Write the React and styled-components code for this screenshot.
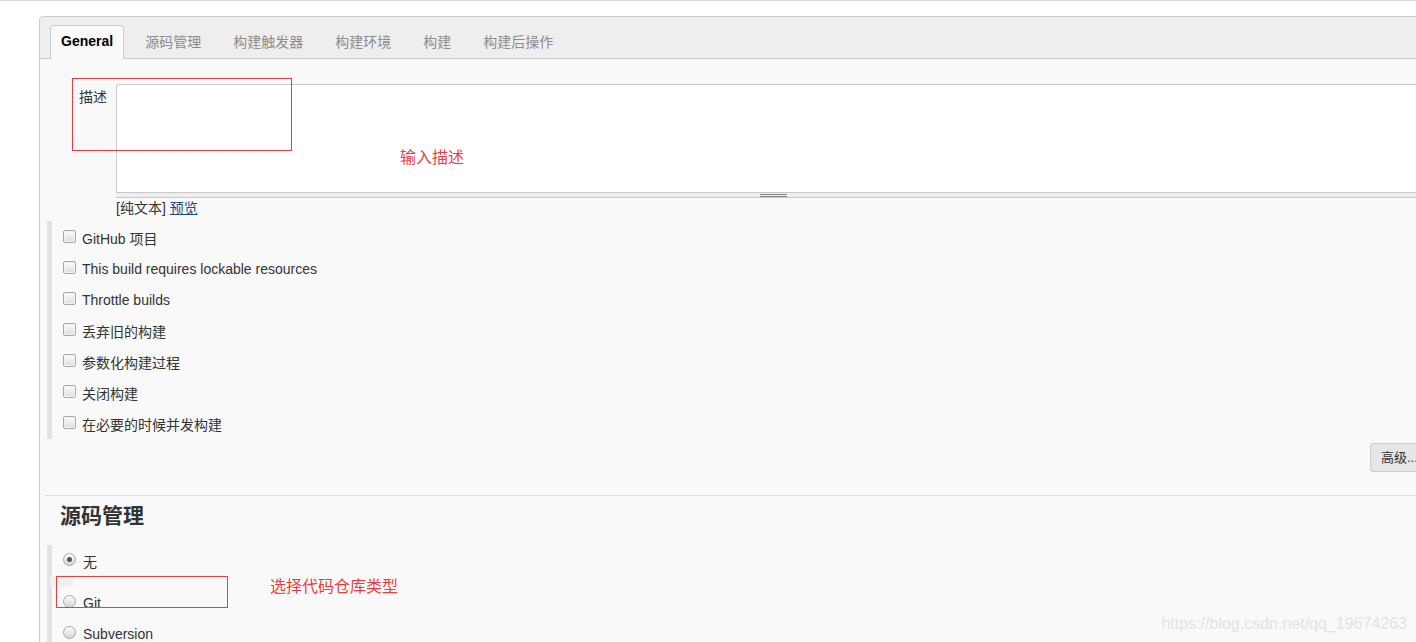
import styled, { createGlobalStyle } from "styled-components";

const GlobalStyle = createGlobalStyle`
  html, body {
    margin: 0;
    padding: 0;
    background: #ffffff;
    overflow: hidden;
  }
  body {
    font-family: "Liberation Sans", Arial, "Noto Sans CJK SC", sans-serif;
    font-size: 14px;
    color: #333333;
  }
`;

const tabs = ["General", "源码管理", "构建触发器", "构建环境", "构建", "构建后操作"];

const options = [
  "GitHub 项目",
  "This build requires lockable resources",
  "Throttle builds",
  "丢弃旧的构建",
  "参数化构建过程",
  "关闭构建",
  "在必要的时候并发构建",
];

export default function App() {
  return (
    <Page>
      <GlobalStyle />
      <TopLine />
      <Panel>
        <TabBar>
          {tabs.map((tab, i) => (
            <Tab key={tab} $active={i === 0}>
              {tab}
            </Tab>
          ))}
        </TabBar>
        <PanelBody>
          <FormRow>
            <Label>描述</Label>
            <Field>
              <TextArea />
              <ResizeBar>
                <Grip />
              </ResizeBar>
              <Hint>
                [纯文本] <PreviewLink>预览</PreviewLink>
              </Hint>
            </Field>
          </FormRow>

          <OptionGroup>
            {options.map((opt) => (
              <OptionRow key={opt}>
                <CheckBox />
                <span>{opt}</span>
              </OptionRow>
            ))}
          </OptionGroup>

          <ButtonRow>
            <AdvancedButton>高级...</AdvancedButton>
          </ButtonRow>

          <Divider />
          <SectionTitle>源码管理</SectionTitle>

          <RadioGroup>
            <OptionRow>
              <Radio $checked />
              <span>无</span>
            </OptionRow>
            <Spacer />
            <OptionRow>
              <Radio />
              <span>Git</span>
            </OptionRow>
            <OptionRow>
              <Radio />
              <span>Subversion</span>
            </OptionRow>
          </RadioGroup>
        </PanelBody>
      </Panel>

      <NoteBox style={{ left: 72, top: 78, width: 218, height: 71 }} />
      <NoteText style={{ left: 400, top: 147 }}>输入描述</NoteText>
      <NoteBox style={{ left: 56, top: 576, width: 170, height: 30 }} />
      <NoteText style={{ left: 270, top: 576 }}>选择代码仓库类型</NoteText>

      <Watermark>https://blog.csdn.net/qq_19674263</Watermark>
    </Page>
  );
}

const Page = styled.div`
  position: relative;
  width: 1416px;
  height: 642px;
  overflow: hidden;
`;

const TopLine = styled.div`
  height: 1px;
  background: #d9d9d4;
`;

const Panel = styled.div`
  margin: 15px 0 0 39px;
  width: 1400px;
  border: 1px solid #cccccc;
  border-radius: 4px 0 0 0;
  background: #f9f9f9;
  height: 700px;
`;

const TabBar = styled.div`
  display: flex;
  align-items: flex-end;
  height: 41px;
  padding-left: 10px;
  background: #eeeeee;
  border-bottom: 1px solid #cccccc;
  border-radius: 4px 0 0 0;
`;

const Tab = styled.div`
  display: flex;
  align-items: center;
  height: 30px;
  padding: 0 ${(p) => (p.$active ? "10px" : "15px")} 3px;
  margin-right: ${(p) => (p.$active ? "5px" : "0")};
  margin-bottom: -1px;
  font-size: 14px;
  font-weight: ${(p) => (p.$active ? "bold" : "normal")};
  color: ${(p) => (p.$active ? "#000000" : "#8c8c8c")};
  background: ${(p) => (p.$active ? "#f9f9f9" : "transparent")};
  border: 1px solid ${(p) => (p.$active ? "#cccccc" : "transparent")};
  border-bottom: none;
  border-radius: 4px 4px 0 0;
`;

const PanelBody = styled.div`
  padding: 25px 10px 0 0;
`;

const FormRow = styled.div`
  display: flex;
  align-items: flex-start;
`;

const Label = styled.div`
  width: 37px;
  margin-left: 39px;
  padding-top: 6px;
  line-height: 15px;
`;

const Field = styled.div`
  flex: 1;
  display: flex;
  flex-direction: column;
`;

const TextArea = styled.div`
  height: 107px;
  background: #ffffff;
  border: 1px solid #cccccc;
  border-bottom: none;
  border-radius: 3px 3px 0 0;
`;

const ResizeBar = styled.div`
  display: flex;
  justify-content: center;
  height: 3px;
  padding-top: 1px;
  background: #eeeeee;
  border-top: 1px solid #c6c6c6;
  border-bottom: 1px solid #c6c6c6;
`;

const Grip = styled.div`
  width: 27px;
  height: 3px;
  border-top: 1px solid #888888;
  border-bottom: 1px solid #888888;
  box-sizing: border-box;
`;

const Hint = styled.div`
  height: 20px;
  line-height: 20px;
  color: #333333;
`;

const PreviewLink = styled.span`
  color: #204a87;
  text-decoration: underline;
`;

const OptionGroup = styled.div`
  margin: 3px 0 0 7px;
  padding: 1px 0 0 11px;
  border-left: 5px solid #e3e3e3;
`;

const OptionRow = styled.div`
  display: flex;
  align-items: center;
  height: 31px;
  gap: 6px;
`;

const CheckBox = styled.span`
  width: 11px;
  height: 11px;
  border: 1px solid #a8a8a8;
  border-radius: 2px;
  background: linear-gradient(#fdfdfd, #dcdcdc);
  box-shadow: inset 0 0 0 1px #f4f4f4;
  margin-top: -3px;
`;

const Radio = styled.span`
  position: relative;
  width: 11px;
  height: 11px;
  border: 1px solid #a8a8a8;
  border-radius: 50%;
  background: linear-gradient(#fdfdfd, #d6d6d6);
  margin-top: -3px;
  margin-right: 1px;

  &::after {
    content: "";
    display: ${(p) => (p.$checked ? "block" : "none")};
    position: absolute;
    left: 3px;
    top: 3px;
    width: 5px;
    height: 5px;
    border-radius: 50%;
    background: #555555;
  }
`;

const ButtonRow = styled.div`
  display: flex;
  justify-content: flex-end;
  margin-top: 4px;
`;

const AdvancedButton = styled.div`
  width: 48px;
  height: 27px;
  line-height: 27px;
  padding-left: 10px;
  background: #e6e6e6;
  border: 1px solid #cccccc;
  border-radius: 3px;
  font-size: 13px;
  color: #333333;
`;

const Divider = styled.div`
  margin: 23px 0 0 5px;
  height: 1px;
  background: #dddddd;
`;

const SectionTitle = styled.div`
  margin: 6px 0 0 20px;
  height: 28px;
  line-height: 28px;
  font-size: 21px;
  font-weight: bold;
  color: #333333;
`;

const RadioGroup = styled.div`
  margin: 15px 0 0 7px;
  padding: 0 0 0 11px;
  border-left: 5px solid #e3e3e3;
  height: 200px;
`;

const Spacer = styled.div`
  height: 11px;
  width: 23px;
  margin-left: -13px;
  background: #f0f0f0;
`;

const NoteBox = styled.div`
  position: absolute;
  border: 1px solid #f23a3a;
`;

const NoteText = styled.div`
  position: absolute;
  font-size: 16px;
  line-height: 22px;
  color: #f23a3a;
`;

const Watermark = styled.div`
  position: absolute;
  right: 9px;
  bottom: 9px;
  font-size: 16px;
  color: #e2e2e2;
`;
